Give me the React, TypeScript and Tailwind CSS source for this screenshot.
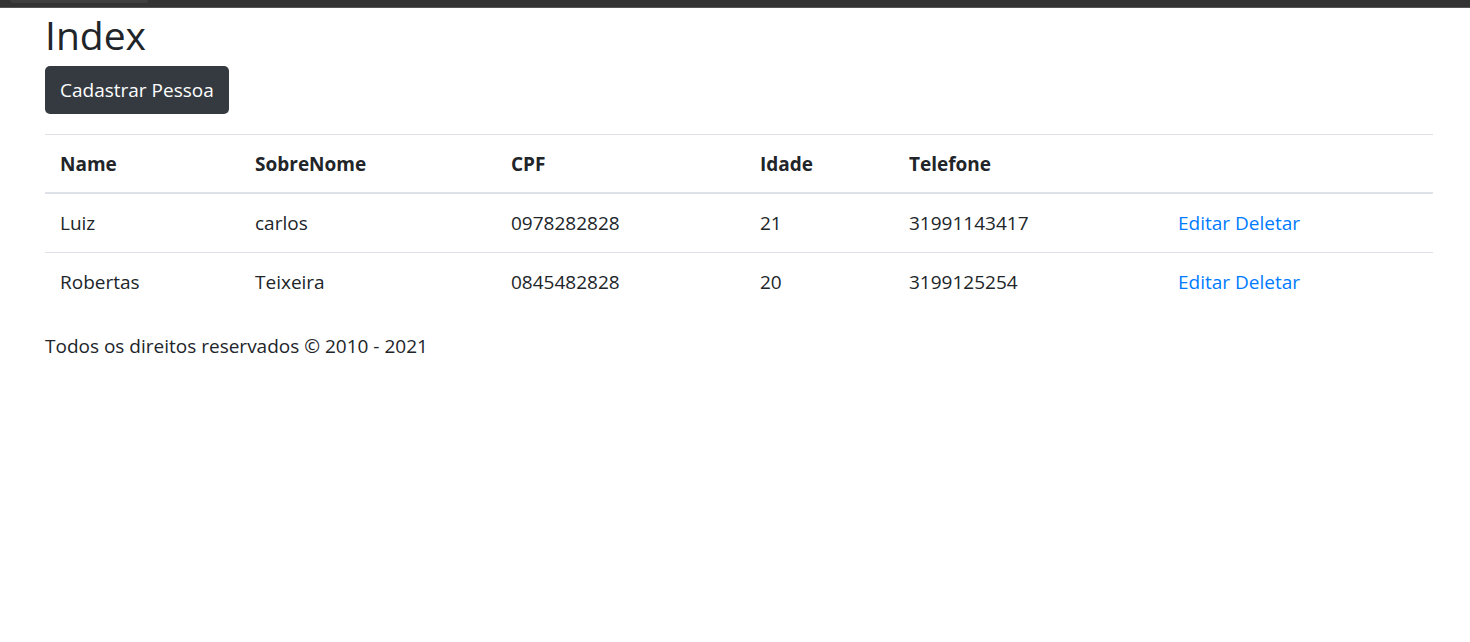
export default function App() {
  const pessoas = [
    { nome: 'Luiz', sobrenome: 'carlos', cpf: '0978282828', idade: '21', telefone: '31991143417' },
    { nome: 'Robertas', sobrenome: 'Teixeira', cpf: '0845482828', idade: '20', telefone: '3199125254' },
  ];

  return (
    <div className="min-h-screen bg-white text-[19px] leading-[30px] text-[#212529]" style={{ fontFamily: '"Open Sans", "Noto Sans", sans-serif' }}>
      <div className="h-[8px] bg-[#333333] border-b border-[#555]">
        <div className="ml-[10px] w-[138px] h-[3px] rounded-b-[6px] bg-[#3f3f3f]" />
      </div>
      <div className="ml-[45px] w-[1388px]">
        <h1 className="text-[39px] leading-[54px] font-medium mt-0 mb-[4px]">Index</h1>
        <button className="h-[48px] px-[15px] rounded-[5px] bg-[#343a40] text-white text-[19px]">Cadastrar Pessoa</button>

        <table className="w-full mt-[20px] border-collapse table-fixed">
          <thead>
            <tr className="border-t border-[#dee2e6]">
              <th className="w-[195px] text-left font-bold px-[15px] pt-[14px] pb-[13px] border-b-2 border-[#dee2e6]">Name</th>
              <th className="w-[256px] text-left font-bold px-[15px] pt-[14px] pb-[13px] border-b-2 border-[#dee2e6]">SobreNome</th>
              <th className="w-[249px] text-left font-bold px-[15px] pt-[14px] pb-[13px] border-b-2 border-[#dee2e6]">CPF</th>
              <th className="w-[149px] text-left font-bold px-[15px] pt-[14px] pb-[13px] border-b-2 border-[#dee2e6]">Idade</th>
              <th className="w-[269px] text-left font-bold px-[15px] pt-[14px] pb-[13px] border-b-2 border-[#dee2e6]">Telefone</th>
              <th className="text-left font-bold px-[15px] pt-[14px] pb-[13px] border-b-2 border-[#dee2e6]"></th>
            </tr>
          </thead>
          <tbody>
            {pessoas.map((p, i) => (
              <tr key={i} className={i > 0 ? 'border-t border-[#dee2e6]' : ''}>
                <td className="px-[15px] py-[14px]">{p.nome}</td>
                <td className="px-[15px] py-[14px]">{p.sobrenome}</td>
                <td className="px-[15px] py-[14px]">{p.cpf}</td>
                <td className="px-[15px] py-[14px]">{p.idade}</td>
                <td className="px-[15px] py-[14px]">{p.telefone}</td>
                <td className="px-[15px] py-[14px] text-[#007bff]">
                  <a href="#">Editar</a> <a href="#">Deletar</a>
                </td>
              </tr>
            ))}
          </tbody>
        </table>

        <footer className="mt-[20px]">Todos os direitos reservados © 2010 - 2021</footer>
      </div>
    </div>
  );
}
